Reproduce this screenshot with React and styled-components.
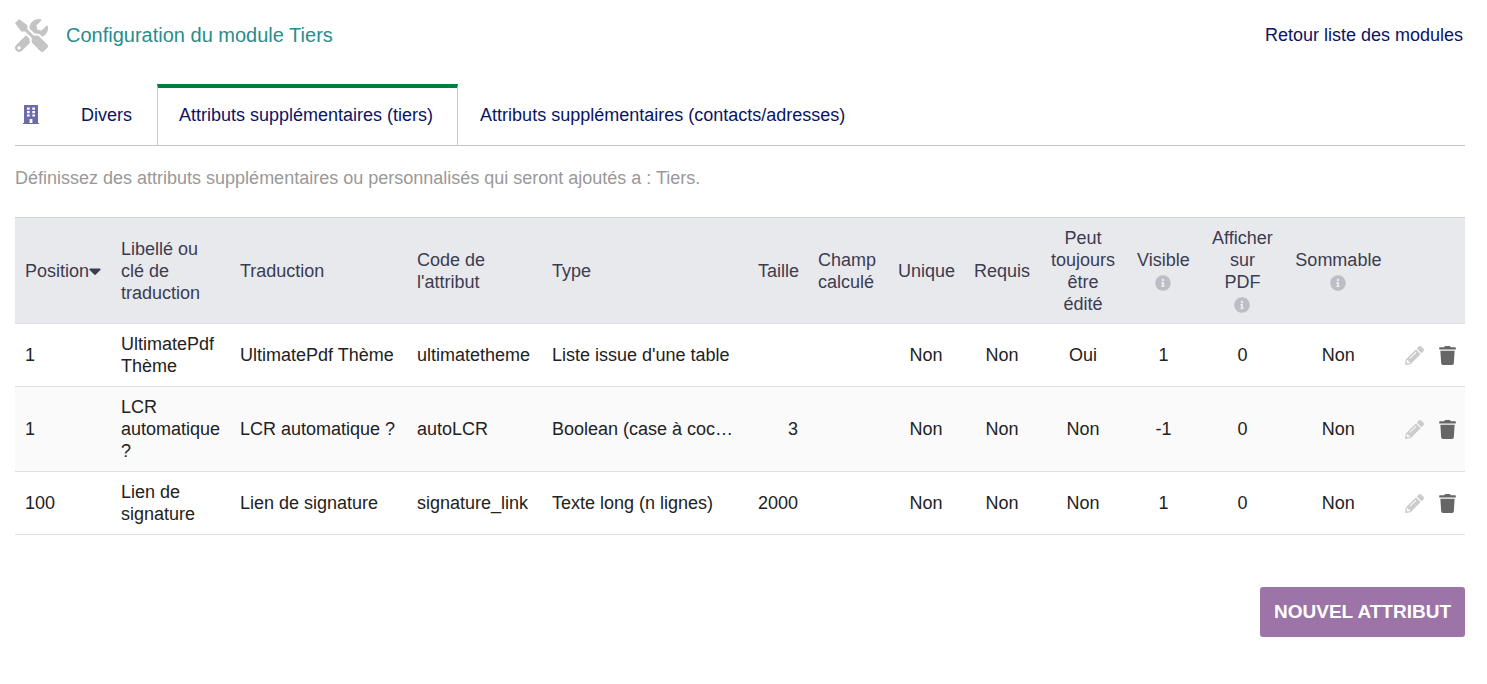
import React from "react"
import styled, { createGlobalStyle } from "styled-components"
import {
  FaCaretDown,
  FaInfoCircle,
  FaPencilAlt,
  FaTools,
  FaTrash,
} from "react-icons/fa"

const GlobalStyle = createGlobalStyle`
  body {
    margin: 0;
    background-color: #fff;
    color: #222;
    font-family: "Liberation Sans", Arial, sans-serif;
    font-size: 18px;
    line-height: 22px;
  }
`

const Page = styled.main`
  padding: 16px 22px 40px 15px;
`

const TitleBar = styled.header`
  display: flex;
  align-items: center;
  justify-content: space-between;
  height: 38px;
  padding-right: 2px;
`

const TitleGroup = styled.div`
  display: flex;
  align-items: center;
  gap: 18px;
  color: #c4c4c4;
`

const Title = styled.h1`
  margin: 0;
  color: #2a8c8c;
  font-size: 20px;
  font-weight: 400;
`

const BackLink = styled.a`
  color: #0a1464;
  text-decoration: none;
`

const Tabs = styled.nav`
  display: flex;
  align-items: stretch;
  height: 61px;
  margin-top: 30px;
  border-bottom: 1px solid #c4c4c4;
`

const TabIcon = styled.span`
  display: flex;
  align-items: center;
  padding: 0 20px 0 8px;
  color: #6c6aa8;
`

const Tab = styled.a`
  display: flex;
  align-items: center;
  padding: 0 24px 4px 21px;
  border: 1px solid ${props => (props.$active ? "#ccc" : "transparent")};
  border-top: 4px solid ${props => (props.$active ? "#00803c" : "transparent")};
  border-bottom: 0;
  color: #0a1464;
  text-decoration: none;
`

const Description = styled.p`
  margin: 21px 0 28px;
  color: #999;
`

const Table = styled.table`
  width: 100%;
  table-layout: fixed;
  border-collapse: collapse;
  border-top: 1px solid #d4d4d4;
`

const Col = styled.col`
  width: ${props => props.$share}%;
`

const HeadRow = styled.tr`
  background-color: #e8e9ed;
  border-bottom: 1px solid #e0e0e0;
`

const Row = styled.tr`
  border-bottom: 1px solid #e0e0e0;

  &:nth-child(even) {
    background-color: #fafafa;
  }
`

const HeadCell = styled.th`
  padding: 9px 10px 8px;
  color: #3c3c50;
  font-weight: 400;
  text-align: ${props => props.$align || "left"};

  &:first-child {
    white-space: nowrap;
  }
`

const Cell = styled.td`
  padding: 9px 10px;
  text-align: ${props => props.$align || "left"};
`

const TypeCell = styled(Cell)`
  overflow: hidden;
  text-overflow: ellipsis;
  white-space: nowrap;
`

const ActionsCell = styled(Cell)`
  padding-right: 8px;
`

const SortIcon = styled(FaCaretDown)`
  width: 12px;
  height: 20px;
  vertical-align: -4px;
`

const InfoIcon = styled(FaInfoCircle)`
  display: block;
  margin: 4px auto 2px;
  color: #bdbdc6;
`

const Actions = styled.div`
  display: flex;
  align-items: center;
  justify-content: flex-end;
  gap: 14px;
`

const IconButton = styled.button`
  display: flex;
  padding: 0;
  border: 0;
  background: none;
  color: ${props => props.$color};
  cursor: pointer;
`

const Footer = styled.div`
  display: flex;
  justify-content: flex-end;
  margin-top: 52px;
`

const NewButton = styled.button`
  height: 50px;
  padding: 0 14px;
  border: 0;
  border-radius: 3px;
  background-color: #9c74a8;
  color: #fff;
  font-family: inherit;
  font-size: 19px;
  font-weight: 700;
  text-transform: uppercase;
  cursor: pointer;
`

const BuildingIcon = () => (
  <svg width="16" height="19" viewBox="0 0 16 19" aria-hidden="true">
    <path
      fill="currentColor"
      fillRule="evenodd"
      d="M1.6 0h12.8l.6.6V18h1v1H0v-1h1V.6zM4 2.6v2.2h2.7V2.6zm5.3 0v2.2H12V2.6zM4 6v2.2h2.7V6zm5.3 0v2.2H12V6zM4 9.4v2.2h2.7V9.4zm5.3 0v2.2H12V9.4zM6.6 14v4h2.8v-4z"
    />
  </svg>
)

const columns = [
  { key: "position", label: "Position", share: 96, sorted: true },
  { key: "label", label: "Libellé ou clé de traduction", share: 119 },
  { key: "translation", label: "Traduction", share: 177 },
  { key: "code", label: "Code de l'attribut", share: 135 },
  { key: "type", label: "Type", share: 206 },
  { key: "size", label: "Taille", share: 60, align: "right" },
  { key: "computed", label: "Champ calculé", share: 80 },
  { key: "unique", label: "Unique", share: 76, align: "center" },
  { key: "required", label: "Requis", share: 76, align: "center" },
  { key: "editable", label: "Peut toujours être édité", share: 86, align: "center" },
  { key: "visible", label: "Visible", share: 75, align: "center", info: true },
  { key: "pdf", label: "Afficher sur PDF", share: 83, align: "center", info: true },
  { key: "summable", label: "Sommable", share: 109, align: "center", info: true },
]

const actionsShare = 72
const total = columns.reduce((sum, column) => sum + column.share, actionsShare)

const attributes = [
  {
    position: "1",
    label: "UltimatePdf Thème",
    translation: "UltimatePdf Thème",
    code: "ultimatetheme",
    type: "Liste issue d'une table",
    size: "",
    unique: "Non",
    required: "Non",
    editable: "Oui",
    visible: "1",
    pdf: "0",
    summable: "Non",
  },
  {
    position: "1",
    label: "LCR automatique ?",
    translation: "LCR automatique ?",
    code: "autoLCR",
    type: "Boolean (case à cocher)",
    size: "3",
    unique: "Non",
    required: "Non",
    editable: "Non",
    visible: "-1",
    pdf: "0",
    summable: "Non",
  },
  {
    position: "100",
    label: "Lien de signature",
    translation: "Lien de signature",
    code: "signature_link",
    type: "Texte long (n lignes)",
    size: "2000",
    unique: "Non",
    required: "Non",
    editable: "Non",
    visible: "1",
    pdf: "0",
    summable: "Non",
  },
]

const App = () => (
  <>
    <GlobalStyle />
    <Page>
      <TitleBar>
        <TitleGroup>
          <FaTools size={33} />
          <Title>Configuration du module Tiers</Title>
        </TitleGroup>
        <BackLink href="#modules">Retour liste des modules</BackLink>
      </TitleBar>
      <Tabs>
        <TabIcon>
          <BuildingIcon />
        </TabIcon>
        <Tab href="#divers">Divers</Tab>
        <Tab href="#tiers" $active>
          Attributs supplémentaires (tiers)
        </Tab>
        <Tab href="#contacts">Attributs supplémentaires (contacts/adresses)</Tab>
      </Tabs>
      <Description>
        Définissez des attributs supplémentaires ou personnalisés qui seront
        ajoutés a : Tiers.
      </Description>
      <Table>
        <colgroup>
          {columns.map(column => (
            <Col key={column.key} $share={(column.share / total) * 100} />
          ))}
          <Col $share={(actionsShare / total) * 100} />
        </colgroup>
        <thead>
          <HeadRow>
            {columns.map(column => (
              <HeadCell key={column.key} $align={column.align} scope="col">
                {column.label}
                {column.sorted && <SortIcon />}
                {column.info && <InfoIcon size={16} />}
              </HeadCell>
            ))}
            <HeadCell as="td" />
          </HeadRow>
        </thead>
        <tbody>
          {attributes.map(attribute => (
            <Row key={attribute.code}>
              {columns.map(column => {
                const ValueCell = column.key === "type" ? TypeCell : Cell
                return (
                  <ValueCell key={column.key} $align={column.align}>
                    {attribute[column.key]}
                  </ValueCell>
                )
              })}
              <ActionsCell>
                <Actions>
                  <IconButton type="button" aria-label="Modifier" $color="#ccc">
                    <FaPencilAlt size={19} />
                  </IconButton>
                  <IconButton type="button" aria-label="Supprimer" $color="#666">
                    <FaTrash size={19} />
                  </IconButton>
                </Actions>
              </ActionsCell>
            </Row>
          ))}
        </tbody>
      </Table>
      <Footer>
        <NewButton type="button">Nouvel attribut</NewButton>
      </Footer>
    </Page>
  </>
)

export default App
